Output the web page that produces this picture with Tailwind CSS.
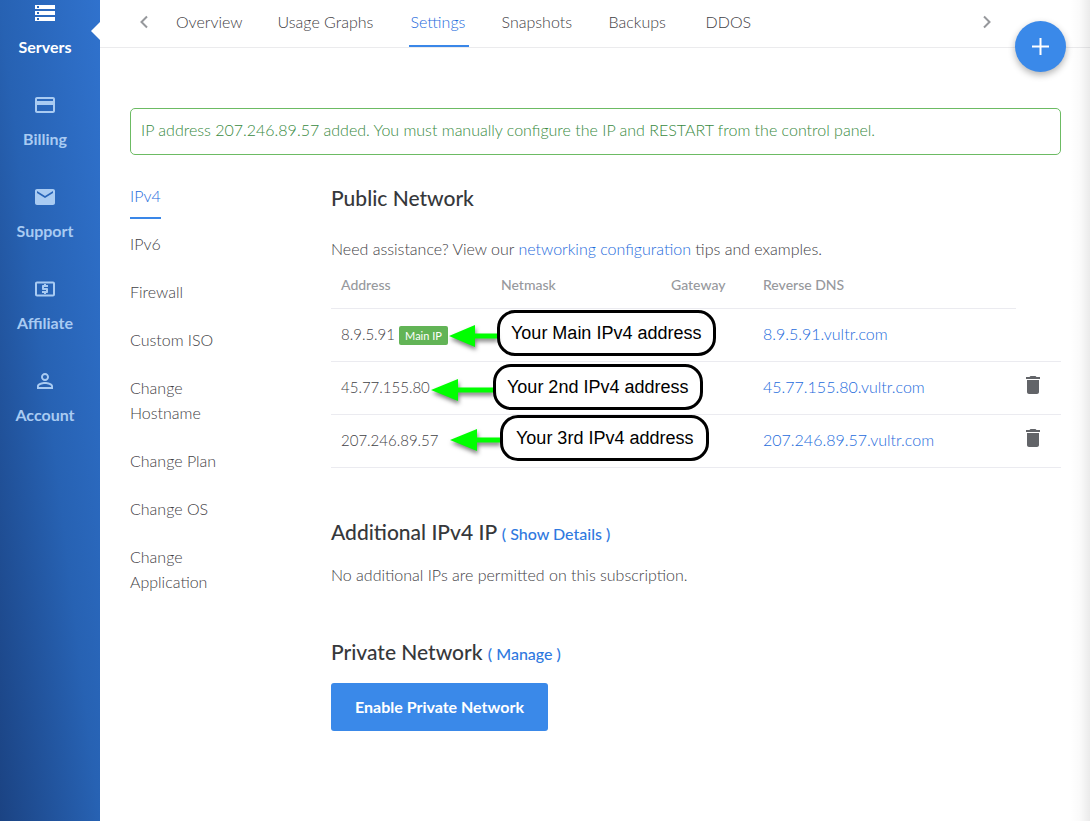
<!DOCTYPE html>
<html lang="en">
<head>
<meta charset="utf-8">
<title>Server Settings</title>
<script src="https://cdn.jsdelivr.net/npm/@tailwindcss/browser@4"></script>
</head>
<body class="flex min-h-screen bg-white font-['Lato','Open_Sans',sans-serif] text-base font-light leading-[25px] text-[#3f4145]">

<aside class="relative w-[100px] shrink-0 bg-linear-to-bl from-[#3072cd] via-[#2762b3] to-[#1b4383]">
  <nav class="flex flex-col pt-px text-base font-bold leading-6 text-[#a9cbf2]">
    <a href="#" class="flex h-[92px] w-[90px] flex-col items-center gap-[10px] text-white">
      <svg class="size-6" viewBox="0 0 24 24" fill="currentColor"><path d="M2 20h20v-4H2v4zm2-3h2v2H4v-2zM2 4v4h20V4H2zm4 3H4V5h2v2zm-4 7h20v-4H2v4zm2-3h2v2H4v-2z"/></svg>
      Servers
    </a>
    <a href="#" class="flex h-[92px] w-[90px] flex-col items-center gap-[10px]">
      <svg class="size-6" viewBox="0 0 24 24" fill="currentColor"><path d="M20 4H4c-1.11 0-1.99.89-1.99 2L2 18c0 1.11.89 2 2 2h16c1.11 0 2-.89 2-2V6c0-1.11-.89-2-2-2zm0 14H4v-6h16v6zm0-10H4V6h16v2z"/></svg>
      Billing
    </a>
    <a href="#" class="flex h-[92px] w-[90px] flex-col items-center gap-[10px]">
      <svg class="size-6" viewBox="0 0 24 24" fill="currentColor"><path d="M20 4H4c-1.1 0-1.99.9-1.99 2L2 18c0 1.1.9 2 2 2h16c1.1 0 2-.9 2-2V6c0-1.1-.9-2-2-2zm0 4l-8 5-8-5V6l8 5 8-5v2z"/></svg>
      Support
    </a>
    <a href="#" class="flex h-[92px] w-[90px] flex-col items-center gap-[10px]">
      <svg class="size-6" viewBox="0 0 24 24" fill="currentColor"><path d="M11 17h2v-1h1c.55 0 1-.45 1-1v-3c0-.55-.45-1-1-1h-3v-1h4V8h-2V7h-2v1h-1c-.55 0-1 .45-1 1v3c0 .55.45 1 1 1h3v1H9v2h2v1z"/><path d="M20 4.500H4c-1.110 0-2 .89-2 2v11c0 1.110.89 2 2 2h16c1.110 0 2-.89 2-2v-11c0-1.110-.89-2-2-2zm0 13H4v-11h16v11z"/></svg>
      Affiliate
    </a>
    <a href="#" class="flex h-[92px] w-[90px] flex-col items-center gap-[10px]">
      <svg class="size-6" viewBox="0 0 24 24" fill="currentColor"><path d="M12 5.900a2.100 2.100 0 1 1 0 4.200 2.100 2.100 0 0 1 0-4.200m0 9c2.970 0 6.100 1.460 6.100 2.100v1.100H5.900V17c0-.64 3.130-2.100 6.100-2.100M12 4C9.790 4 8 5.790 8 8s1.790 4 4 4 4-1.790 4-4-1.790-4-4-4zm0 9c-2.670 0-8 1.340-8 4v3h16v-3c0-2.660-5.330-4-8-4z"/></svg>
      Account
    </a>
  </nav>
  <svg class="absolute right-0 top-[22px] h-[18px] w-[9px]" viewBox="0 0 9 18" fill="#fff"><path d="M9 0L0 9l9 9z"/></svg>
</aside>

<main class="relative min-w-0 flex-1">
  <header class="flex h-12 items-start justify-between border-b border-[#ebebed] pl-[39px] pr-[98px]">
    <button type="button" aria-label="Previous tabs" class="mt-[15px]">
      <svg class="h-[14px] w-[10px]" viewBox="0 0 10 14" fill="none" stroke="#96989c" stroke-width="2"><path d="M8 1.500L2.500 7 8 12.500"/></svg>
    </button>
    <nav class="flex flex-1 gap-[31px] pl-[25px]">
      <a href="#" class="h-[47px] min-w-[69px] px-[2px] pt-[9px]">Overview</a>
      <a href="#" class="h-[47px] min-w-[102px] px-[2px] pt-[9px]">Usage Graphs</a>
      <a href="#" class="h-[47px] min-w-[60px] border-b-2 border-[#3a87e8] px-[2px] pt-[9px] text-[#1d6bdc]">Settings</a>
      <a href="#" class="h-[47px] min-w-[76px] px-[2px] pt-[9px]">Snapshots</a>
      <a href="#" class="h-[47px] min-w-[66px] px-[2px] pt-[9px]">Backups</a>
      <a href="#" class="h-[47px] min-w-[46px] px-[2px] pt-[9px]">DDOS</a>
    </nav>
    <button type="button" aria-label="Next tabs" class="mt-[15px]">
      <svg class="h-[14px] w-[10px]" viewBox="0 0 10 14" fill="none" stroke="#96989c" stroke-width="2"><path d="M2 1.500L7.500 7 2 12.500"/></svg>
    </button>
  </header>

  <div class="pl-[30px] pr-[29px] pt-[60px]">
    <p role="status" class="rounded-[5px] border border-[#6cbb63] px-[10px] pb-3 pt-2 text-[#388a3e]">IP address 207.246.89.57 added. You must manually configure the IP and RESTART from the control panel.</p>

    <div class="flex gap-[71px] pt-7">
      <nav class="flex w-[130px] shrink-0 flex-col items-start gap-[23px] pr-5">
        <a href="#" class="-mb-[11px] border-b-2 border-[#3a87e8] pb-[9px] text-[#1d6bdc]">IPv4</a>
        <a href="#">IPv6</a>
        <a href="#">Firewall</a>
        <a href="#">Custom ISO</a>
        <a href="#">Change Hostname</a>
        <a href="#">Change Plan</a>
        <a href="#">Change OS</a>
        <a href="#">Change Application</a>
      </nav>

      <div class="min-w-0 flex-1">
        <section class="pt-px">
          <h2 class="text-[21px] font-medium leading-7 text-[#36383b]">Public Network</h2>
          <p class="pb-px pt-6">Need assistance? View our <a href="#" class="text-[#1d6bdc]">networking configuration</a> tips and examples.</p>
          <div class="relative">
            <table class="w-full table-fixed text-left">
              <colgroup>
                <col class="w-[160px]"><col class="w-[170px]"><col class="w-[92px]"><col><col class="w-[45px]">
              </colgroup>
              <thead class="text-sm text-[#97999d]">
                <tr class="h-[46px]">
                  <th class="border-b border-[#ebebf0] px-[10px] font-medium">Address</th>
                  <th class="border-b border-[#ebebf0] px-[10px] font-medium">Netmask</th>
                  <th class="border-b border-[#ebebf0] px-[10px] font-medium">Gateway</th>
                  <th class="border-b border-[#ebebf0] px-[10px] font-medium">Reverse DNS</th>
                  <td></td>
                </tr>
              </thead>
              <tbody>
                <tr class="h-[53px] border-b border-[#ebebf0]">
                  <td class="whitespace-nowrap pl-[10px] text-[15px]">8.9.5.91 <span class="inline-block rounded-xs bg-[#62b456] px-[6px] text-[11px] font-normal leading-[19px] text-white">Main IP</span></td>
                  <td></td>
                  <td></td>
                  <td class="px-[10px] pb-[3px]"><a href="#" class="text-[#1d6bdc]">8.9.5.91.vultr.com</a></td>
                  <td></td>
                </tr>
                <tr class="h-[53px] border-b border-[#ebebf0]">
                  <td class="px-[10px] text-[15px]">45.77.155.80</td>
                  <td></td>
                  <td></td>
                  <td class="px-[10px] pb-[3px]"><a href="#" class="text-[#1d6bdc]">45.77.155.80.vultr.com</a></td>
                  <td class="pl-[5px]"><button type="button" aria-label="Delete 45.77.155.80" class="block pb-[5px]"><svg class="size-6" viewBox="0 0 24 24" fill="#626468"><path d="M6 19c0 1.100.9 2 2 2h8c1.100 0 2-.9 2-2V7H6v12zM19 4h-3.500l-1-1h-5l-1 1H5v2h14V4z"/></svg></button></td>
                </tr>
                <tr class="h-[53px] border-b border-[#ebebf0]">
                  <td class="px-[10px] text-[15px]">207.246.89.57</td>
                  <td></td>
                  <td></td>
                  <td class="px-[10px] pb-[3px]"><a href="#" class="text-[#1d6bdc]">207.246.89.57.vultr.com</a></td>
                  <td class="pl-[5px]"><button type="button" aria-label="Delete 207.246.89.57" class="block pb-[5px]"><svg class="size-6" viewBox="0 0 24 24" fill="#626468"><path d="M6 19c0 1.100.9 2 2 2h8c1.100 0 2-.9 2-2V7H6v12zM19 4h-3.500l-1-1h-5l-1 1H5v2h14V4z"/></svg></button></td>
                </tr>
              </tbody>
            </table>

            <!-- Callouts over the address table -->
            <div class="absolute left-[118px] top-[48px] flex items-center font-['Liberation_Sans',Arial,sans-serif] text-lg font-normal leading-[25px] text-black">
              <svg class="mt-[6px] h-7 w-12 drop-shadow-[1px_3px_2px_rgba(0,0,0,0.5)]" viewBox="0 0 48 28" fill="#00ff00"><path d="M0 14L26 3v8.500h22v5H26V25z"/></svg>
              <span class="whitespace-nowrap rounded-[18px] border-3 border-black bg-white pb-[7px] pl-[11px] pr-3 pt-2">Your Main IPv4 address</span>
            </div>
            <div class="absolute left-[100px] top-[102px] flex items-center font-['Liberation_Sans',Arial,sans-serif] text-lg font-normal leading-[25px] text-black">
              <svg class="mt-[6px] h-7 w-[62px] drop-shadow-[1px_3px_2px_rgba(0,0,0,0.5)]" viewBox="0 0 62 28" fill="#00ff00"><path d="M0 14L27 3v8.500h35v5H27V25z"/></svg>
              <span class="whitespace-nowrap rounded-[18px] border-3 border-black bg-white pb-[7px] pl-[11px] pr-3 pt-2">Your 2nd IPv4 address</span>
            </div>
            <div class="absolute left-[119px] top-[153px] flex items-center font-['Liberation_Sans',Arial,sans-serif] text-lg font-normal leading-[25px] text-black">
              <svg class="mt-[4px] h-7 w-[50px] drop-shadow-[1px_3px_2px_rgba(0,0,0,0.5)]" viewBox="0 0 50 28" fill="#00ff00"><path d="M0 14L27 3v8.500h23v5H27V25z"/></svg>
              <span class="whitespace-nowrap rounded-[18px] border-3 border-black bg-white px-[13px] pb-[7px] pt-2">Your 3rd IPv4 address</span>
            </div>
          </div>
        </section>

        <section class="pt-[50px]">
          <h2 class="text-[21px] font-medium leading-7 text-[#36383b]">Additional IPv4 IP <a href="#" class="text-base text-[#2f79e0]">( Show Details )</a></h2>
          <p class="pt-4">No additional IPs are permitted on this subscription.</p>
        </section>

        <section class="pt-[51px]">
          <h2 class="text-[21px] font-medium leading-7 text-[#36383b]">Private Network <a href="#" class="text-base text-[#2f79e0]">( Manage )</a></h2>
          <button type="button" class="mt-[17px] h-12 rounded-[3px] bg-[#3a89e9] px-6 font-bold text-white">Enable Private Network</button>
        </section>
      </div>
    </div>
  </div>

  <button type="button" aria-label="Add" class="absolute right-6 top-[21px] flex size-[51px] items-center justify-center rounded-full bg-[#3a89e9] shadow-[0_3px_7px_rgba(0,0,0,0.3)]">
    <svg class="size-[17px]" viewBox="0 0 17 17" stroke="#fff" stroke-width="2"><path d="M8.500 0v17M0 8.500h17"/></svg>
  </button>
  <div class="pointer-events-none absolute inset-y-0 right-0 w-5 bg-linear-to-l from-black/8 via-black/2 to-transparent"></div>
</main>
</body>
</html>
